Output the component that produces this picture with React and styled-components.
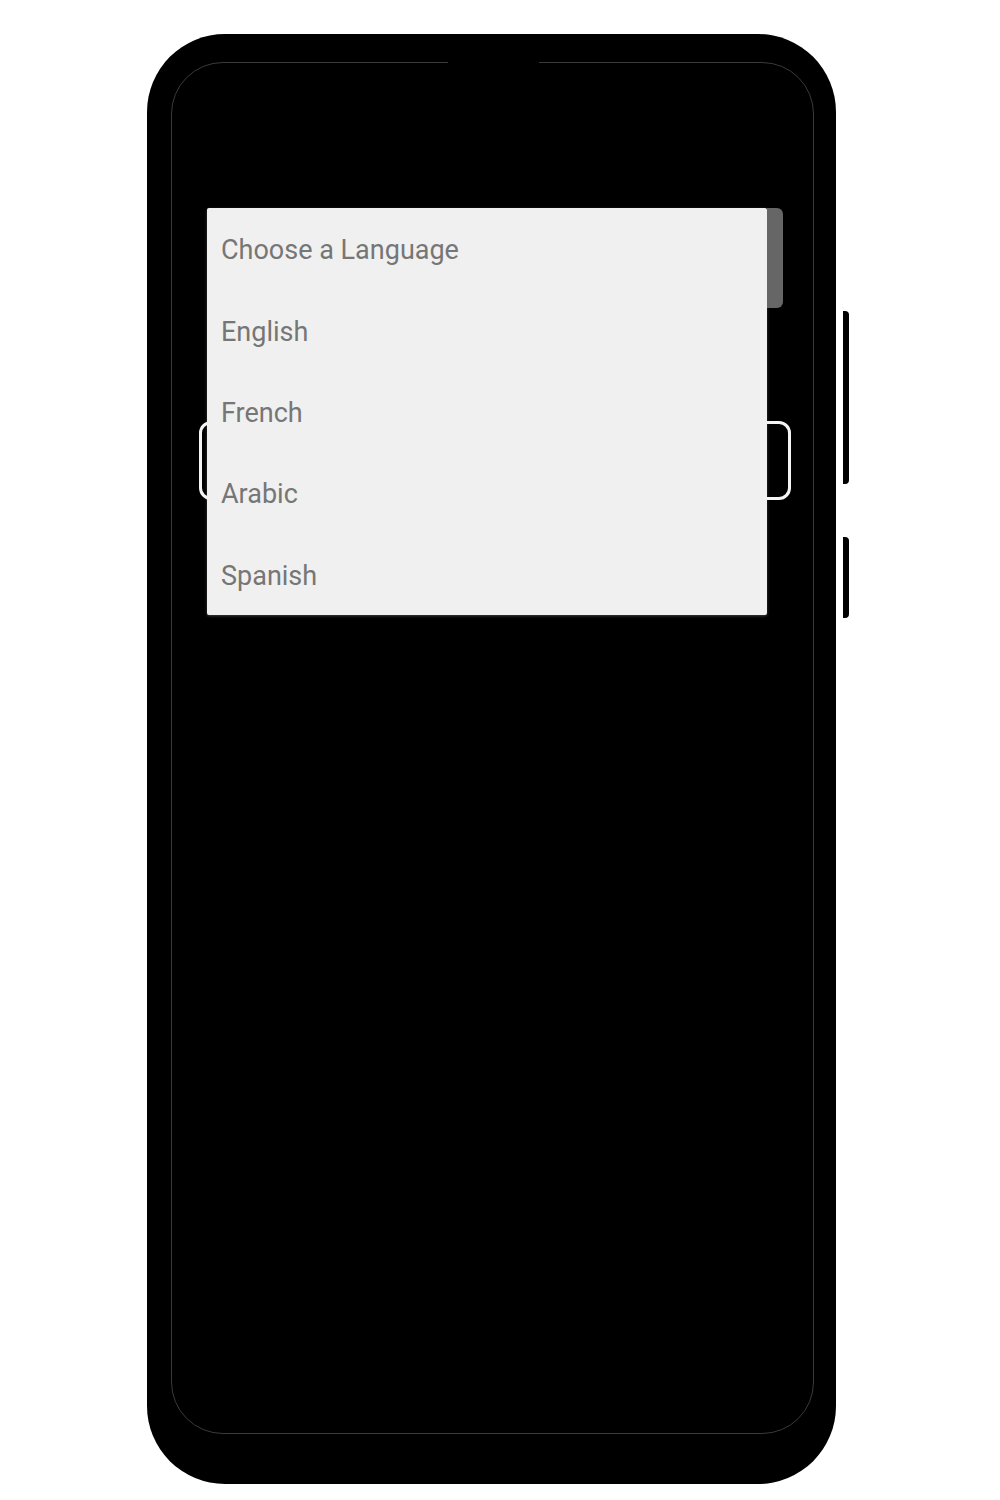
import React from "react";
import styled, { createGlobalStyle } from "styled-components";

const GlobalStyle = createGlobalStyle`
  body {
    margin: 0;
    background: #ffffff;
    font-family: Roboto, "Liberation Sans", sans-serif;
  }
`;

const Page = styled.div`
  width: 1000px;
  height: 1500px;
  padding: 34px 0 0 147px;
  box-sizing: border-box;
`;

const Device = styled.div`
  display: flex;
  align-items: flex-start;
  gap: 7px;
`;

const Phone = styled.div`
  width: 689px;
  height: 1450px;
  background: #000;
  border-radius: 78px;
  padding: 28px 22px 0 24px;
  box-sizing: border-box;
`;

const ButtonColumn = styled.div`
  display: flex;
  flex-direction: column;
  gap: 53px;
  padding-top: 277px;
`;

const SideButton = styled.div`
  width: 6px;
  height: ${(p) => p.height}px;
  background: #000;
  border-radius: 0 4px 4px 0;
`;

const Screen = styled.div`
  position: relative;
  width: 643px;
  height: 1372px;
  border: 1px solid #3a3a3a;
  border-radius: 52px;
  box-sizing: border-box;
  padding: 358px 0 0 27px;
`;

const Notch = styled.div`
  position: absolute;
  top: -2px;
  left: 276px;
  width: 91px;
  height: 4px;
  background: #000;
`;

const SelectField = styled.div`
  position: relative;
  width: 592px;
  height: 79px;
  border: 3px solid #f4f4f4;
  border-radius: 12px;
  box-sizing: border-box;
`;

const Menu = styled.div`
  position: absolute;
  left: 5px;
  top: -216px;
  display: flex;
`;

const List = styled.ul`
  width: 560px;
  margin: 0;
  padding: 0;
  list-style: none;
  background: #f0f0f0;
  border-radius: 2px;
  box-shadow: 0 1px 3px rgba(255, 255, 255, 0.25);
`;

const Item = styled.li`
  height: 81.4px;
  display: flex;
  align-items: center;
  padding: 3px 0 0 14px;
  box-sizing: border-box;
  font-size: 27px;
  color: #767676;
`;

const Scrollbar = styled.div`
  width: 16px;
  height: 100px;
  background: #666;
  border-radius: 0 6px 6px 0;
`;

const languages = ["Choose a Language", "English", "French", "Arabic", "Spanish"];

const App = () => (
  <>
    <GlobalStyle />
    <Page>
      <Device>
        <Phone>
          <Screen>
            <Notch />
            <SelectField>
              <Menu>
                <List>
                  {languages.map((lang) => (
                    <Item key={lang}>{lang}</Item>
                  ))}
                </List>
                <Scrollbar />
              </Menu>
            </SelectField>
          </Screen>
        </Phone>
        <ButtonColumn>
          <SideButton height={173} />
          <SideButton height={81} />
        </ButtonColumn>
      </Device>
    </Page>
  </>
);

export default App;
